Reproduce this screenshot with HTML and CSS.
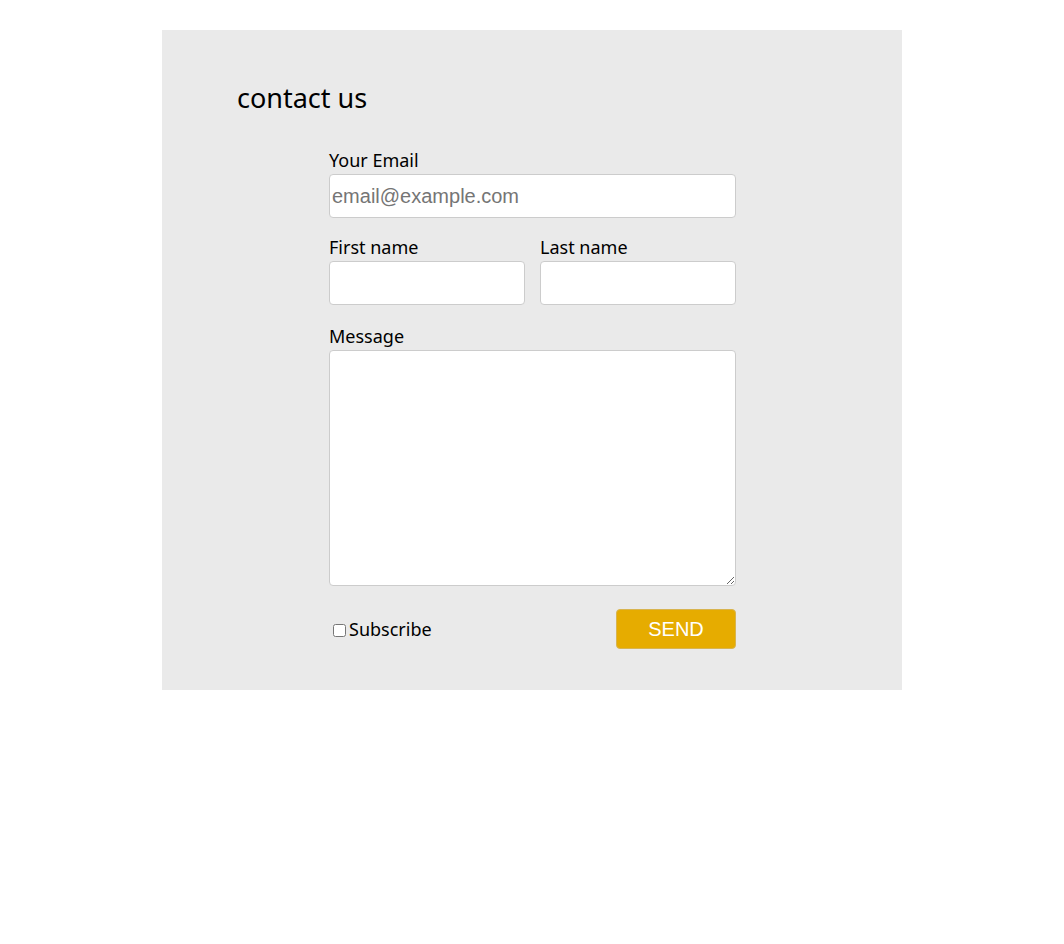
FILE: index.html
```html
<!DOCTYPE html>
<html lang="en">
<head>
    <meta charset="UTF-8">
    <meta name="viewport" content="width=device-width, initial-scale=1.0">
    <title>Contact us</title>
    <link rel="stylesheet" href="styles.css">
</head>
<body>
    <div class="container">
        <h1 class="title">contact us</h1>

        <form class="contact-form">
            <div class="field">
                <label for="email">Your Email</label>
                <input type="text" id="email" placeholder="email@example.com">
            </div>

            <div class="row">
                <div class="field">
                    <label for="firstName">First name</label>
                    <input type="text" id="firstName">
                </div>
                <div class="field">
                    <label for="lastName">Last name</label>
                    <input type="text" id="lastName">
                </div>
            </div>

            <div class="field message-field">
                <label for="message">Message</label>
                <textarea id="message"></textarea>
            </div>

            <div class="form-footer">
                <label class="subscribe"><input type="checkbox">Subscribe</label>
                <button type="button" class="send-btn">SEND</button>
            </div>
        </form>
    </div>
</body>
</html>
```

FILE: styles.css
```css
:root {
    --panel-color: #eaeaea;
    --border-color: #cccccc;
    --accent-color: #e6ac00;
    --text-color: #000000;
}

* {
    margin: 0;
    padding: 0;
    box-sizing: border-box;
}

body {
    font-family: 'Noto Sans', sans-serif;
    color: var(--text-color);
    background-color: white;
}

.container {
    width: 740px;
    margin: 30px auto 0;
    padding: 52px 0 41px 75px;
    background-color: var(--panel-color);
}

.title {
    font-size: 27px;
    font-weight: 400;
    line-height: 32px;
    margin-bottom: 32px;
}

.contact-form {
    width: 407px;
    margin-left: 92px;
    display: flex;
    flex-direction: column;
    gap: 15px;
}

.field {
    display: flex;
    flex-direction: column;
    flex: 1;
}

.field label {
    font-size: 18px;
    line-height: 28px;
}

.message-field {
    margin-top: 2px;
}

input[type="text"],
textarea {
    width: 100%;
    height: 44px;
    padding: 0 2px;
    border: 1px solid var(--border-color);
    border-radius: 4px;
    background-color: white;
    font-family: 'Liberation Sans', Arial, sans-serif;
    font-size: 20px;
}

input::placeholder {
    color: #757575;
}

textarea {
    height: 236px;
    resize: vertical;
}

.row {
    display: flex;
    gap: 15px;
}

.form-footer {
    display: flex;
    justify-content: space-between;
    align-items: center;
    margin-top: 8px;
}

.subscribe {
    display: flex;
    align-items: center;
    font-size: 18px;
    line-height: 24px;
    padding-left: 4px;
}

.subscribe input {
    width: 13px;
    height: 13px;
    margin: 2px 3px 0 0;
}

.send-btn {
    width: 120px;
    height: 40px;
    background-color: var(--accent-color);
    color: white;
    border: 1px solid #d8b450;
    border-radius: 4px;
    font-family: 'Liberation Sans', Arial, sans-serif;
    font-size: 20px;
    cursor: pointer;
}
```
